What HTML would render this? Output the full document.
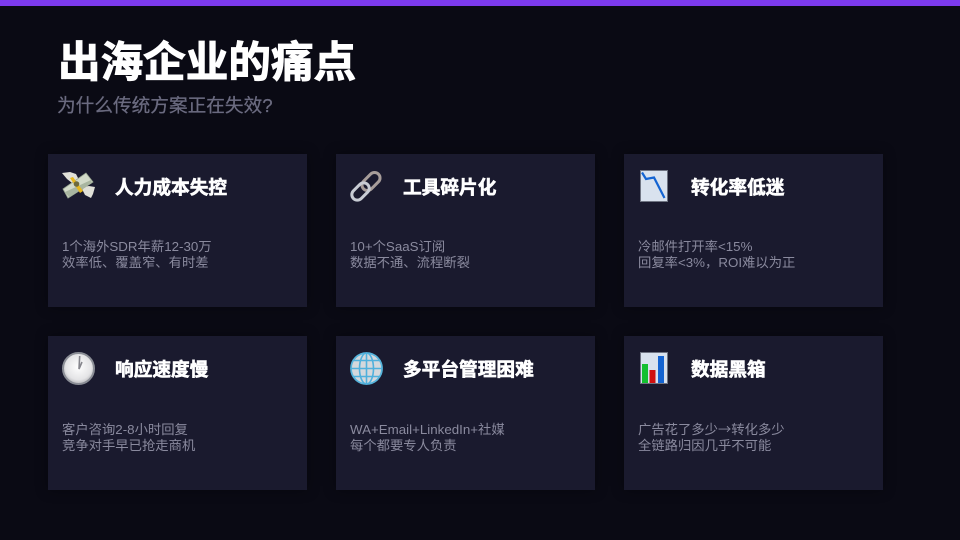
<!DOCTYPE html>
<html lang="zh"><head><meta charset="utf-8"><style>
*{margin:0;padding:0;box-sizing:border-box}
html,body{width:960px;height:540px;overflow:hidden;background:#0a0a14}
body{position:relative;font-family:"Liberation Sans","Noto Sans CJK SC",sans-serif}
.bar{position:absolute;left:0;top:0;width:960px;height:6px;background:#7c3aed}
.t{position:absolute;white-space:nowrap}
h1{left:58px;top:33px;font-size:42.6px;line-height:60px;font-weight:700;color:#fff;-webkit-text-stroke:1px #fff}
.sub{left:57px;top:92px;font-size:18.67px;line-height:28px;color:#6b6b80;-webkit-text-stroke:.25px #6b6b80}
.c{position:absolute;width:259px;background:#1a1a2e;box-shadow:0 0 12px rgba(0,0,0,.35)}
.c h2{position:absolute;left:67px;top:20px;font-size:18.7px;line-height:27px;color:#fff;font-weight:700;white-space:nowrap;-webkit-text-stroke:.6px #fff}
.c p{position:absolute;left:14px;top:85px;font-size:13.33px;line-height:16px;color:#8a8a9e;white-space:nowrap}
.r2 p{top:86px}
.c svg{position:absolute;left:11px;top:14px;width:40px;height:36px}
.a{font-family:"Noto Sans CJK SC",sans-serif;line-height:0}
</style></head><body>
<div class="bar"></div>
<h1 class="t">出海企业的痛点</h1>
<div class="t sub">为什么传统方案正在失效?</div>

<div class="c" style="left:48px;top:154px;height:153px">
<svg viewBox="0 0 40 36"><path d="M3 5 11 4 17 6 20 12 13 15 8 11Z" fill="#e0e0d8"/><path d="M22 19 30 18 36 19 34 26 32 30 26 27Z" fill="#e0e0d8"/><path d="M4 21 27 5 34 14 9 30Z" fill="#d2dac9" stroke="#9aa893" stroke-width=".8"/><path d="M6 24 10 29 33 15 32 12Z" fill="#a8b5a0"/><path d="M11 10 14 9 24 23 21 25Z" fill="#e6b820"/><circle cx="17.500" cy="16" r="2.800" fill="#6d6a3e"/></svg>
<h2>人力成本失控</h2><p>1个海外SDR年薪12-30万<br>效率低、覆盖窄、有时差</p></div>

<div class="c" style="left:336px;top:154px;height:153px">
<svg viewBox="0 0 40 36"><g fill="none" stroke-width="3"><rect x="13.500" y="8" width="21" height="11" rx="5.500" transform="rotate(-45 24 13.500)" stroke="#a79d9a"/><rect x="3.500" y="18" width="20" height="11" rx="5.500" transform="rotate(-45 13.500 23.500)" stroke="#c8ccd4"/></g></svg>
<h2>工具碎片化</h2><p>10+个SaaS订阅<br>数据不通、流程断裂</p></div>

<div class="c" style="left:624px;top:154px;height:153px">
<svg viewBox="0 0 40 36"><rect x="5.500" y="2.500" width="27" height="31" fill="#d9e2ee" stroke="#6f7482"/><path d="M7 4.500 11 11 19 9.500 29.500 30" fill="none" stroke="#1464d2" stroke-width="2.200"/></svg>
<h2>转化率低迷</h2><p>冷邮件打开率&lt;15%<br>回复率&lt;3%，ROI难以为正</p></div>

<div class="c r2" style="left:48px;top:336px;height:154px">
<svg viewBox="0 0 40 36"><defs><radialGradient id="g" cx=".5" cy=".45" r=".55"><stop offset="0" stop-color="#fff"/><stop offset=".75" stop-color="#e4e4e6"/><stop offset="1" stop-color="#b8b8bc"/></radialGradient></defs><circle cx="19.500" cy="18.500" r="15.500" fill="url(#g)" stroke="#8b8e96" stroke-width="2"/><path d="M20.700 6 20 19 23 12" fill="none" stroke="#85858c" stroke-width="1.600"/></svg>
<h2>响应速度慢</h2><p>客户咨询2-8小时回复<br>竞争对手早已抢走商机</p></div>

<div class="c r2" style="left:336px;top:336px;height:154px">
<svg viewBox="0 0 40 36"><circle cx="19.500" cy="18.500" r="15.500" fill="#d4d8dc" stroke="#56b4dc" stroke-width="1.800"/><g fill="none" stroke="#4fb0dc" stroke-width="1.600"><ellipse cx="19.500" cy="18.500" rx="7" ry="15.500"/><path d="M19.500 3V34M4 18.500H35M7 10.500H32M7 26.500H32"/></g></svg>
<h2>多平台管理困难</h2><p>WA+Email+LinkedIn+社媒<br>每个都要专人负责</p></div>

<div class="c r2" style="left:624px;top:336px;height:154px">
<svg viewBox="0 0 40 36"><rect x="5.500" y="2.500" width="27" height="31" fill="#d9e2ee" stroke="#6f7482"/><rect x="7" y="14" width="6" height="19" fill="#14c030"/><rect x="14.500" y="20" width="6" height="13" fill="#d01010"/><rect x="23" y="6" width="6" height="27" fill="#1464d2"/></svg>
<h2>数据黑箱</h2><p>广告花了多少<span class="a">→</span>转化多少<br>全链路归因几乎不可能</p></div>
</body></html>
